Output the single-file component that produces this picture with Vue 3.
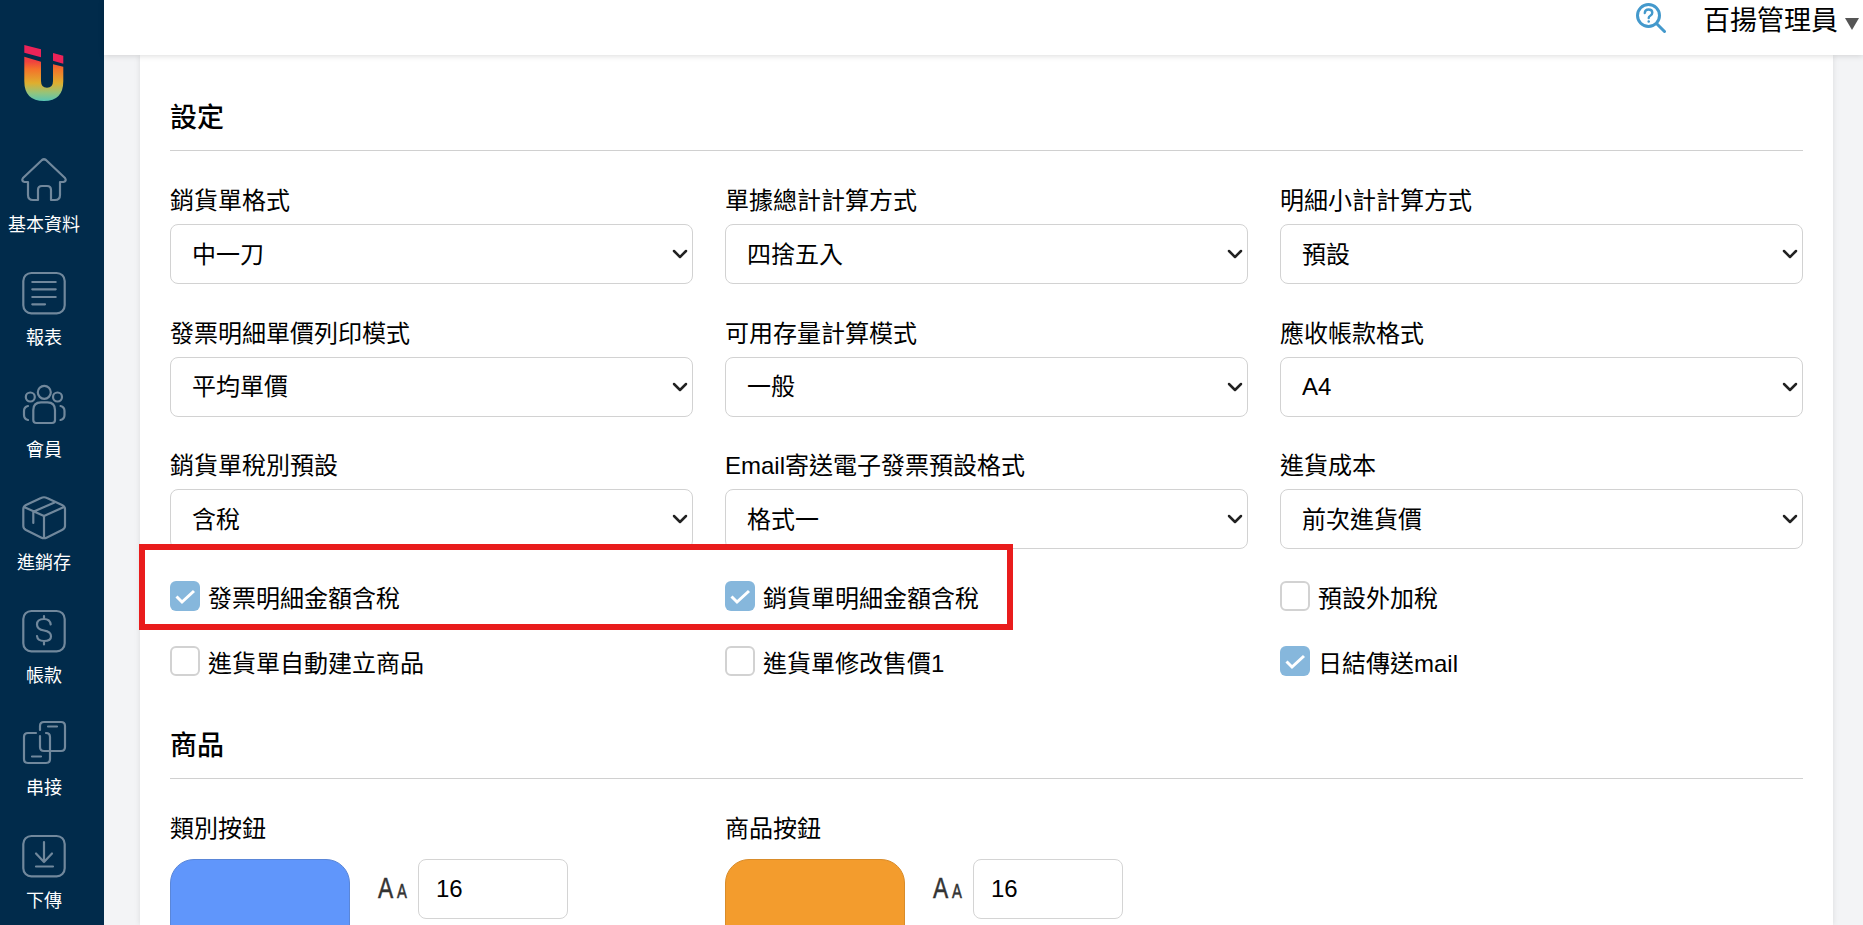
<script setup>
const nav = [
  { label: '基本資料', icon: 'home' },
  { label: '報表', icon: 'report' },
  { label: '會員', icon: 'members' },
  { label: '進銷存', icon: 'box' },
  { label: '帳款', icon: 'money' },
  { label: '串接', icon: 'link' },
  { label: '下傳', icon: 'download' }
]
const selects = [
  { label: '銷貨單格式', value: '中一刀' },
  { label: '單據總計計算方式', value: '四捨五入' },
  { label: '明細小計計算方式', value: '預設' },
  { label: '發票明細單價列印模式', value: '平均單價' },
  { label: '可用存量計算模式', value: '一般' },
  { label: '應收帳款格式', value: 'A4' },
  { label: '銷貨單稅別預設', value: '含稅' },
  { label: 'Email寄送電子發票預設格式', value: '格式一' },
  { label: '進貨成本', value: '前次進貨價' }
]
const checks = [
  { label: '發票明細金額含稅', on: true },
  { label: '銷貨單明細金額含稅', on: true },
  { label: '預設外加稅', on: false },
  { label: '進貨單自動建立商品', on: false },
  { label: '進貨單修改售價1', on: false },
  { label: '日結傳送mail', on: true }
]
const buttons = [
  { label: '類別按鈕', color: '#6096fb', edge: '#5a86d8' },
  { label: '商品按鈕', color: '#f39c2d', edge: '#d98c2a' }
]
</script>

<template>
  <div class="page">
    <aside class="side">
      <svg class="logo" viewBox="0 0 40 58" width="40" height="58">
        <defs>
          <linearGradient id="ug" x1="0" y1="0.1" x2="0" y2="1">
            <stop offset="0" stop-color="#f0403f" />
            <stop offset="0.2" stop-color="#f4722a" />
            <stop offset="0.55" stop-color="#dfae2e" />
            <stop offset="0.8" stop-color="#93c47c" />
            <stop offset="1" stop-color="#58c4b4" />
          </linearGradient>
        </defs>
        <path d="M0.300 0 L17 4.300 V12.300 L0.300 7.700Z M29 8 L39.300 10.700 V18.700 L29 15.700Z" fill="#ec2358" />
        <path d="M0.300 11.700 L17 16.700 V36 Q17 42.700 23 42.700 Q29 42.700 29 36 V19.300 L39.300 21.700 V36 Q39.300 56 20 56 Q0.300 56 0.300 36Z" fill="url(#ug)" />
      </svg>
      <nav class="nav">
        <div v-for="n in nav" :key="n.label" class="nav-item">
          <svg class="nav-icon" viewBox="0 0 44 44" width="44" height="44" fill="none" stroke="#71889c" stroke-width="2.200" stroke-linecap="round" stroke-linejoin="round">
            <template v-if="n.icon === 'home'">
              <path d="M20 2 Q22 0.500 24 2 L43 20 Q45 23 41.500 24 H38 V37 Q38 42 33 42 H29 V32 Q29 28 25 28 H20 Q16 28 16 32 V42 H11 Q6 42 6 37 V24 H2.500 Q-1 23 1 20 Z" />
            </template>
            <template v-else-if="n.icon === 'report'">
              <rect x="1.300" y="2" width="41.400" height="40.300" rx="8" />
              <path d="M10.300 11 H33.700 M10.300 18.300 H33.700 M10.300 26 H33.700 M10.300 33.300 H23" />
            </template>
            <template v-else-if="n.icon === 'members'">
              <circle cx="22.300" cy="9.300" r="6.500" />
              <circle cx="8.300" cy="14" r="4.500" />
              <circle cx="35.500" cy="14" r="4.500" />
              <path d="M11.300 27 Q11.300 19.300 19 19.300 H25.500 Q33 19.300 33 27 V37 Q33 40 30 40 H14.300 Q11.300 40 11.300 37 Z" />
              <path d="M6 23 Q2 24 2 28 V32 Q2 36 6 37 M38.500 23 Q42.500 24 42.500 28 V32 Q42.500 36 38.500 37" />
            </template>
            <template v-else-if="n.icon === 'box'">
              <path d="M19 2 Q22 0.500 25 2 L40 9 Q43 10.500 43 13 V30 Q43 32.500 40 34 L25 41.500 Q22 43 19 41.500 L4 34 Q1.300 32.500 1.300 30 V13 Q1.300 10.500 4 9 Z" />
              <path d="M2 11 L22 20 L42 11 M22 20 V42 M32.500 6.500 L11.300 15.700 V27" />
            </template>
            <template v-else-if="n.icon === 'money'">
              <rect x="1.300" y="2" width="41.400" height="40.300" rx="8" />
              <path d="M28.700 15.500 Q28 10 22 10 Q15 10 15 15.500 Q15 20.500 22 21.500 Q29 22.500 29 27.500 Q29 32 22 32 Q15.500 32 15 27 M22 7 V10 M22 32 V35.500" />
            </template>
            <template v-else-if="n.icon === 'link'">
              <path d="M18 9 V5 Q18 1 22 1 H39 Q43 1 43 5 V26 Q43 30 39 30 H22 Q18 30 18 26 V15" />
              <path d="M14 12 H6 Q2 12 2 16 V38 Q2 42 6 42 H24 Q28 42 28 38 V16 Q28 12 24 12" />
              <path d="M26 5.500 H35 M10 35.500 H19" />
            </template>
            <template v-else>
              <rect x="1.300" y="2" width="41.400" height="40.300" rx="8" />
              <path d="M22 8 V28 M14 19.500 L22 28 L30 19.500 M14 32.500 H31" />
            </template>
          </svg>
          <span class="nav-label">{{ n.label }}</span>
        </div>
      </nav>
    </aside>
    <div class="body">
      <header class="top">
        <svg class="help" viewBox="0 0 30 30" width="30" height="30" fill="none" stroke="#4499cc" stroke-width="3" stroke-linecap="round">
          <circle cx="12.500" cy="12.500" r="11" />
          <path d="M21 21 L28.500 28.500" />
          <path d="M8.800 10 Q9 6.500 12.500 6.500 Q16.300 6.500 16.300 9.700 Q16.300 11.700 14.300 12.700 Q12.700 13.500 12.700 15" stroke-width="2.400" />
          <circle cx="12.700" cy="18.500" r="0.700" fill="#4499cc" stroke-width="1.200" />
        </svg>
        <span class="user">百揚管理員</span>
        <span class="caret"></span>
      </header>
      <main class="content">
        <section class="card">
          <h2 class="title">設定</h2>
          <div class="grid">
            <div v-for="s in selects" :key="s.label" class="field">
              <label class="lab">{{ s.label }}</label>
              <div class="sel-wrap">
                <select class="sel"><option>{{ s.value }}</option></select>
                <svg class="chev" viewBox="0 0 16 10" width="16" height="10" fill="none" stroke="#222" stroke-width="2.500" stroke-linecap="round" stroke-linejoin="round">
                  <path d="M2 2 L8 8 L14 2" />
                </svg>
              </div>
            </div>
          </div>
          <div class="checks-wrap">
            <div class="checks">
              <label v-for="c in checks" :key="c.label" class="check">
                <span class="box" :class="{ on: c.on }">
                  <svg v-if="c.on" viewBox="0 0 30 30" width="30" height="30" fill="none" stroke="#fff" stroke-width="3">
                    <path d="M6.500 15.500 L12 21 L24 10" />
                  </svg>
                </span>
                <span>{{ c.label }}</span>
              </label>
            </div>
            <div class="mark"></div>
          </div>
          <h2 class="title second">商品</h2>
          <div class="grid">
            <div v-for="b in buttons" :key="b.label" class="field">
              <label class="lab lab-btn">{{ b.label }}</label>
              <div class="btn-row">
                <div class="swatch" :style="{ background: b.color, borderColor: b.edge }"></div>
                <span class="aa"><span class="big">A</span><span class="small">A</span></span>
                <input class="size" value="16" />
              </div>
            </div>
          </div>
        </section>
      </main>
    </div>
  </div>
</template>

<style>
html, body { margin: 0; overflow: hidden; background: #f3f4f6; }
</style>

<style scoped>
.page {
  display: flex;
  width: 1863px;
  height: 925px;
  overflow: hidden;
  font-family: "Liberation Sans", "Noto Sans CJK TC", sans-serif;
  color: #000;
  background: #f3f4f6;
}
.side {
  width: 104px;
  flex: none;
  box-sizing: border-box;
  padding-right: 16px;
  background: #012b4b;
  display: flex;
  flex-direction: column;
  align-items: center;
}
.logo { margin-top: 45px; flex: none; }
.nav { margin-top: 55px; display: flex; flex-direction: column; gap: 34.670px; }
.nav-item {
  display: flex;
  flex-direction: column;
  align-items: center;
  height: 78px;
  color: #fff;
}
.nav-icon { flex: none; overflow: visible; }
.nav-label { font-size: 18px; line-height: 27px; margin-top: 10px; white-space: nowrap; }
.body { flex: 1; min-width: 0; display: flex; flex-direction: column; position: relative; }
.top {
  height: 55px;
  flex: none;
  background: #fff;
  box-shadow: 0 1px 6px rgba(0, 0, 0, .14);
  position: relative;
  z-index: 2;
  display: flex;
  justify-content: flex-end;
  align-items: flex-start;
  padding-right: 4px;
  box-sizing: border-box;
}
.help { margin-top: 3px; margin-right: 37px; }
.user { font-size: 27px; line-height: 40px; margin-top: 1px; }
.caret {
  width: 0;
  height: 0;
  margin: 18px 0 0 7px;
  border-left: 7.500px solid transparent;
  border-right: 7.500px solid transparent;
  border-top: 12px solid #555;
}
.content { padding: 0 30px 0 36px; flex: 1; min-height: 0; }
.card {
  background: #fff;
  box-shadow: 0 0 6px rgba(0, 0, 0, .1);
  padding: 43px 30px 0 30px;
  height: 100%;
  box-sizing: border-box;
  width: 1693px;
}
.title {
  margin: 0 0 32px;
  font-size: 27px;
  font-weight: 500;
  line-height: 40px;
  padding-bottom: 12px;
  border-bottom: 1px solid #d0d0d0;
}
.second { margin-top: 50px; }
.grid { display: grid; grid-template-columns: repeat(3, 523px); column-gap: 32px; row-gap: 31.500px; }
.field { display: flex; flex-direction: column; }
.lab { font-size: 24px; line-height: 36px; height: 36px; margin-bottom: 5px; }
.lab-btn { margin-bottom: 12px; }
.sel-wrap { position: relative; height: 60px; }
.sel {
  appearance: none;
  display: block;
  height: 60px;
  width: 100%;
  box-sizing: border-box;
  border: 1px solid #d2d2d2;
  border-radius: 8px;
  background-color: #fff;
  color: #000;
  padding: 0 21px;
  font: inherit;
  font-size: 24px;
}
.chev { position: absolute; right: 5px; top: 25px; pointer-events: none; }
.checks-wrap { position: relative; }
.checks {
  display: grid;
  grid-template-columns: repeat(3, 523px);
  column-gap: 32px;
  row-gap: 35px;
  padding-top: 32px;
}
.check { display: flex; align-items: center; gap: 8px; font-size: 24px; height: 30px; }
.box {
  width: 30px;
  height: 30px;
  box-sizing: border-box;
  border: 2px solid #d2d2d2;
  border-radius: 6px;
  background: #fff;
  flex: none;
  display: block;
}
.box.on { background: #86b7dc; border: none; }
.box svg { display: block; }
.mark {
  position: absolute;
  left: -31px;
  top: -5px;
  width: 874px;
  height: 86px;
  box-sizing: border-box;
  border: 6px solid #e91c1c;
  pointer-events: none;
}
.btn-row { display: flex; align-items: flex-start; }
.swatch {
  width: 180px;
  height: 120px;
  flex: none;
  box-sizing: border-box;
  border: 1px solid;
  border-radius: 24px;
}
.aa {
  width: 68px;
  flex: none;
  height: 60px;
  display: flex;
  justify-content: flex-end;
  padding-right: 11px;
  box-sizing: border-box;
  color: #333;
  align-items: baseline;
  line-height: 58px;
  transform: scaleX(.76);
  transform-origin: 57px 0;
  -webkit-text-stroke: .5px #333;
}
.big { font-size: 30px; }
.small { font-size: 19.500px; margin-left: 5px; }
.size {
  width: 150px;
  height: 60px;
  box-sizing: border-box;
  flex: none;
  border: 1px solid #d4d4d4;
  border-radius: 8px;
  padding: 0 17px;
  font: inherit;
  font-size: 24px;
  color: #000;
}
</style>
